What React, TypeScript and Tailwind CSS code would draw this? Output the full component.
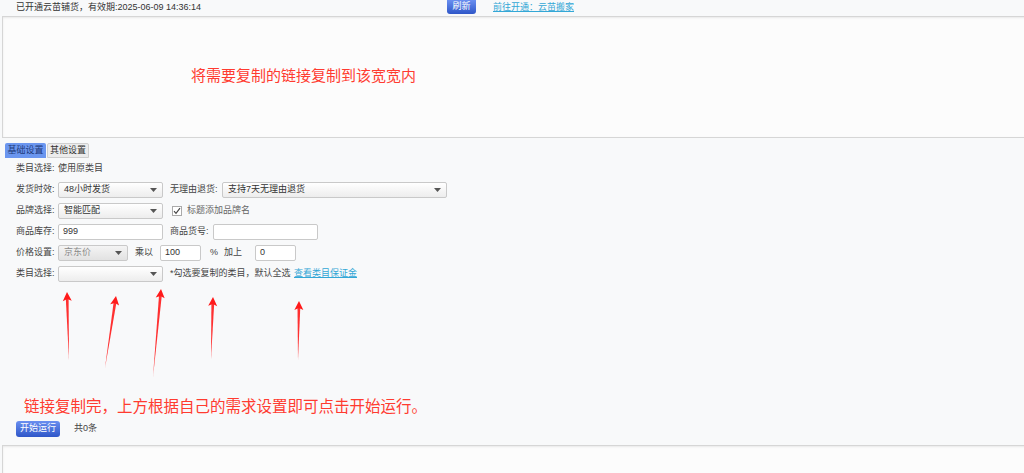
import React from 'react';

const font = { fontFamily: '"Liberation Sans", "Noto Sans CJK SC", sans-serif' };

const Caret = () => (
  <svg width="7" height="4" viewBox="0 0 7 4" className="shrink-0">
    <path d="M0 0 L7 0 L3.5 4 Z" fill="#555" />
  </svg>
);

const Select: React.FC<{ value?: string; className: string; disabled?: boolean }> = ({ value, className, disabled }) => (
  <div
    className={`h-[16px] shrink-0 flex items-center justify-between pl-[5px] pr-[5px] border border-[#c9c9c9] rounded-[2px] ${
      disabled ? 'bg-gradient-to-b from-[#f4f4f4] to-[#e2e2e2] text-[#888]' : 'bg-gradient-to-b from-white to-[#ededed] text-[#333]'
    } ${className}`}
  >
    <span className="whitespace-nowrap">{value}</span>
    <Caret />
  </div>
);

const Input: React.FC<{ value?: string; className: string }> = ({ value, className }) => (
  <div className={`h-[16px] shrink-0 flex items-center pl-[4px] border border-[#c9c9c9] rounded-[2px] bg-white text-[#333] ${className}`}>
    {value}
  </div>
);

const Arrows = () => {
  const arrows = [
    [67, 292, 69, 360],
    [116, 296, 105, 368],
    [161, 289, 153, 377],
    [213, 297, 211, 359],
    [299, 301, 298, 360],
  ];
  return (
    <svg className="absolute left-0 top-0 pointer-events-none" width="1024" height="473">
      {arrows.map(([tx, ty, bx, by], i) => {
        const dx = bx - tx;
        const dy = by - ty;
        const len = Math.hypot(dx, dy);
        const ux = dx / len;
        const uy = dy / len;
        const px = -uy;
        const py = ux;
        const hx = tx + ux * 9;
        const hy = ty + uy * 9;
        const head = `${tx},${ty} ${hx + px * 4.5},${hy + py * 4.5} ${tx + ux * 7},${ty + uy * 7} ${hx - px * 4.5},${hy - py * 4.5}`;
        const shaft = `${tx + ux * 6 + px * 1.4},${ty + uy * 6 + py * 1.4} ${bx},${by} ${tx + ux * 6 - px * 1.4},${ty + uy * 6 - py * 1.4}`;
        return (
          <g key={i}>
            <polygon points={shaft} fill="#ff1a1a" opacity="0.9" />
            <polygon points={head} fill="#ff1a1a" />
          </g>
        );
      })}
    </svg>
  );
};

export default function App() {
  return (
    <div className="relative w-[1024px] h-[473px] overflow-hidden bg-[#f8f9fa] text-[9px] text-[#333] whitespace-nowrap" style={font}>
      <div className="h-[15px] flex items-center">
        <span className="ml-[16px] w-[431px] text-[#333]">已开通云苗铺货，有效期:2025-06-09 14:36:14</span>
        <span className="h-[14px] w-[29px] self-start flex items-center justify-center rounded-b-[3px] bg-gradient-to-b from-[#6a8ff0] to-[#2f56c8] text-white">刷新</span>
        <span className="ml-[17px] text-[#33a7d6] underline">前往开通：云苗搬家</span>
      </div>
      <div className="ml-[2px] mt-[1px] w-[1030px] h-[122px] border border-[#d6d6d6] bg-[#fcfcfc] shadow-[inset_0_1px_2px_rgba(0,0,0,0.08)] flex justify-start">
        <span className="ml-[188px] mt-[49px] text-[15px] leading-[18px] text-[#ff3b30] h-fit" style={{ fontFamily: '"Noto Sans CJK SC", sans-serif' }}>将需要复制的链接复制到该宽宽内</span>
      </div>
      <div className="mt-[5px] ml-[5px] flex h-[15px]">
        <span className="w-[41px] flex items-center justify-center bg-[#6b96ef] text-[#1e3a7a] rounded-t-[2px]">基础设置</span>
        <span className="ml-[1px] w-[42px] flex items-center justify-center bg-[#ececec] border border-[#cfcfcf] text-[#333] rounded-t-[2px]">其他设置</span>
      </div>
      <div className="ml-[16px] mt-[3px] flex flex-col gap-[5px] text-[#444]">
        <div className="h-[16px] flex items-center">
          <span className="w-[42px]">类目选择:</span>
          <span>使用原类目</span>
        </div>
        <div className="h-[16px] flex items-center">
          <span className="w-[42px]">发货时效:</span>
          <Select value="48小时发货" className="w-[105px]" />
          <span className="ml-[7px] w-[52px]">无理由退货:</span>
          <Select value="支持7天无理由退货" className="w-[225px]" />
        </div>
        <div className="h-[16px] flex items-center">
          <span className="w-[42px]">品牌选择:</span>
          <Select value="智能匹配" className="w-[105px]" />
          <span className="ml-[9px] w-[10px] h-[10px] border border-[#aaa] bg-white flex items-center justify-center">
            <svg width="8" height="8" viewBox="0 0 8 8">
              <path d="M1 4.2 L3 6.3 L7 1.2" stroke="#444" strokeWidth="1.2" fill="none" />
            </svg>
          </span>
          <span className="ml-[5px] text-[#666]">标题添加品牌名</span>
        </div>
        <div className="h-[16px] flex items-center">
          <span className="w-[42px]">商品库存:</span>
          <Input value="999" className="w-[105px]" />
          <span className="ml-[7px] w-[43px]">商品货号:</span>
          <Input className="w-[105px]" />
        </div>
        <div className="h-[16px] flex items-center">
          <span className="w-[42px]">价格设置:</span>
          <Select value="京东价" className="w-[70px]" disabled />
          <span className="ml-[7px] w-[25px]">乘以</span>
          <Input value="100" className="w-[41px]" />
          <span className="ml-[9px]">%</span>
          <span className="ml-[6px] w-[31px]">加上</span>
          <Input value="0" className="w-[41px]" />
        </div>
        <div className="h-[16px] flex items-center">
          <span className="w-[42px]">类目选择:</span>
          <Select className="w-[105px]" />
          <span className="ml-[7px] w-[124px]">*勾选要复制的类目，默认全选</span>
          <span className="text-[#33a7d6] underline">查看类目保证金</span>
        </div>
      </div>
      <div className="ml-[24px] mt-[114px] text-[15.5px] leading-[18px] text-[#ff3b30]" style={{ fontFamily: '"Noto Sans CJK SC", sans-serif' }}>链接复制完，上方根据自己的需求设置即可点击开始运行。</div>
      <div className="ml-[16px] mt-[7px] flex items-center h-[16px]">
        <span className="w-[44px] h-[16px] flex items-center justify-center rounded-[3px] bg-gradient-to-b from-[#6a8ff0] to-[#2f56c8] text-white">开始运行</span>
        <span className="ml-[14px] text-[#444]">共0条</span>
      </div>
      <div className="ml-[2px] mt-[8px] w-[1030px] h-[60px] border border-[#d6d6d6] bg-[#fcfcfc] shadow-[inset_0_1px_2px_rgba(0,0,0,0.08)]" />
      <Arrows />
    </div>
  );
}
